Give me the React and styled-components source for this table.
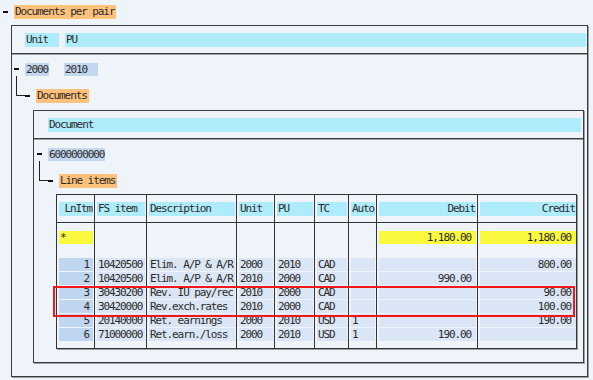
import React from 'react';
import styled, { createGlobalStyle } from 'styled-components';

const GlobalStyle = createGlobalStyle`
  body {
    margin: 0;
    background: #eef4fa;
    font-family: "DejaVu Sans Mono", "Liberation Mono", monospace;
    font-size: 11px;
    letter-spacing: -1.1px;
    color: #2b2b2b;
  }
`;

const COLS = '38px 52px 90px 38px 40px 34px 28px 101px 99px';

const TONES = {
  orange: '#ffc27c',
  cyan: '#aeebfb',
  key: '#c3d7ef',
  item: '#c0d5ef',
  cell: '#dae6f5',
  total: '#f9f93d',
  none: 'transparent',
};

const Page = styled.div`
  width: 593px;
  height: 380px;
  padding-top: 5px;
  box-sizing: border-box;
  overflow: hidden;
`;

const NodeRow = styled.div`
  display: flex;
  align-items: center;
  height: 14px;
  padding-left: 3px;
`;

const Toggle = styled.span`
  flex-shrink: 0;
  width: 5px;
  height: 2px;
  margin-right: 6px;
  background: #111;
`;

const Label = styled.span`
  height: 14px;
  line-height: 14px;
  padding: 0 2px 0 1px;
  background: ${p => TONES[p.$tone]};
  white-space: nowrap;
`;

const Frame = styled.div`
  margin: ${p => p.$margin};
  padding-bottom: 13px;
  border: 1px solid #3d3d3d;
  box-shadow: 1px 1px 0 #9aa0a6;
`;

const FrameHead = styled.div`
  display: flex;
  gap: 6px;
  padding: 7px ${p => p.$right}px 6px ${p => p.$left}px;
  border-bottom: 1px solid #3d3d3d;
  box-shadow: 0 1px 0 #9aa0a6;
`;

const HeadField = styled.span`
  height: 14px;
  line-height: 14px;
  padding-left: 1px;
  background: ${TONES.cyan};
  ${p => (p.$width ? `width: ${p.$width}px;` : 'flex: 1;')}
`;

const FrameBody = styled.div`
  padding-left: ${p => p.$pad}px;
`;

const KeyRow = styled.div`
  display: flex;
  align-items: center;
  height: 14px;
  margin-top: 8px;
`;

const KeySlot = styled.div`
  width: ${p => p.$width}px;
  margin-right: 6px;
  display: flex;
`;

const KeyField = styled.span`
  width: ${p => (p.$width ? `${p.$width}px` : 'auto')};
  height: 13px;
  line-height: 13px;
  padding: 0 1px;
  background: ${TONES.key};
`;

const BranchRow = styled.div`
  display: flex;
  align-items: flex-end;
`;

const Elbow = styled.span`
  flex-shrink: 0;
  width: 9px;
  height: 20px;
  margin: 0 0 7px 2px;
  box-sizing: border-box;
  border-left: 1px solid #222;
  border-bottom: 1px solid #222;
`;

const BranchToggle = styled(Toggle)`
  margin-bottom: 6px;
`;

const Table = styled.div`
  margin: 6px 6px 0 19px;
  border: 1px solid #333;
  box-shadow: 1px 1px 0 #9aa0a6;
`;

const Row = styled.div`
  display: grid;
  grid-template-columns: ${COLS};
  ${p => p.$head && 'border-bottom: 1px solid #333;'}
`;

const Cell = styled.div`
  box-sizing: border-box;
  min-width: 0;
  height: ${p => p.$height}px;
  padding: ${p => p.$pt || 0}px 1px 0 2px;
  border-right: ${p => (p.$last ? 'none' : '1px solid #333')};
`;

const Field = styled.div`
  height: ${p => p.$h || 13}px;
  line-height: ${p => p.$h || 13}px;
  padding: 0 ${p => p.$pr || 0}px 0 1px;
  background: ${p => TONES[p.$tone]};
  text-align: ${p => p.$align || 'left'};
  white-space: nowrap;
  overflow: hidden;
`;

const Highlight = styled.div`
  position: relative;

  &::after {
    content: '';
    position: absolute;
    top: 0;
    left: -4px;
    right: 1px;
    bottom: -3px;
    border: 2px solid #f01818;
    pointer-events: none;
  }
`;

const columns = [
  { key: 'n', title: 'LnItm', align: 'right', pr: 4 },
  { key: 'fs', title: 'FS item' },
  { key: 'desc', title: 'Description' },
  { key: 'unit', title: 'Unit' },
  { key: 'pu', title: 'PU' },
  { key: 'tc', title: 'TC' },
  { key: 'auto', title: 'Auto' },
  { key: 'debit', title: 'Debit', align: 'right', pr: 5 },
  { key: 'credit', title: 'Credit', align: 'right', pr: 5 },
];

const items = [
  { n: '1', fs: '10420500', desc: 'Elim. A/P & A/R', unit: '2000', pu: '2010', tc: 'CAD', auto: '', debit: '', credit: '800.00' },
  { n: '2', fs: '10420500', desc: 'Elim. A/P & A/R', unit: '2010', pu: '2000', tc: 'CAD', auto: '', debit: '990.00', credit: '' },
  { n: '3', fs: '30430200', desc: 'Rev. IU pay/rec', unit: '2010', pu: '2000', tc: 'CAD', auto: '', debit: '', credit: '90.00' },
  { n: '4', fs: '30420000', desc: 'Rev.exch.rates', unit: '2010', pu: '2000', tc: 'CAD', auto: '', debit: '', credit: '100.00' },
  { n: '5', fs: '20140000', desc: 'Ret. earnings', unit: '2000', pu: '2010', tc: 'USD', auto: '1', debit: '', credit: '190.00' },
  { n: '6', fs: '71000000', desc: 'Ret.earn./loss', unit: '2000', pu: '2010', tc: 'USD', auto: '1', debit: '190.00', credit: '' },
];

const totals = { n: '*', debit: '1,180.00', credit: '1,180.00' };

const HeaderRow = () => (
  <Row $head>
    {columns.map((c, i) => (
      <Cell key={c.key} $height={27} $pt={7} $last={i === columns.length - 1}>
        <Field $h={14} $tone="cyan" $align={c.align} $pr={c.align ? 1 : 0}>{c.title}</Field>
      </Cell>
    ))}
  </Row>
);

const TotalRow = () => (
  <Row>
    {columns.map((c, i) => {
      const value = totals[c.key];
      return (
        <Cell key={c.key} $height={35} $pt={8} $last={i === columns.length - 1}>
          {value && (
            <Field $tone="total" $align={c.key === 'n' ? 'left' : c.align} $pr={c.key === 'n' ? 0 : c.pr}>
              {value}
            </Field>
          )}
        </Cell>
      );
    })}
  </Row>
);

const ItemRow = ({ item }) => (
  <Row>
    {columns.map((c, i) => (
      <Cell key={c.key} $height={14} $last={i === columns.length - 1}>
        <Field $tone={c.key === 'n' ? 'item' : 'cell'} $align={c.align} $pr={c.pr}>
          {item[c.key]}
        </Field>
      </Cell>
    ))}
  </Row>
);

const FillerRow = ({ height }) => (
  <Row>
    {columns.map((c, i) => (
      <Cell key={c.key} $height={height} $last={i === columns.length - 1} />
    ))}
  </Row>
);

const LineItems = () => (
  <Table>
    <HeaderRow />
    <TotalRow />
    {items.slice(0, 2).map(item => <ItemRow key={item.n} item={item} />)}
    <Highlight>
      {items.slice(2, 4).map(item => <ItemRow key={item.n} item={item} />)}
    </Highlight>
    {items.slice(4).map(item => <ItemRow key={item.n} item={item} />)}
    <FillerRow height={6} />
  </Table>
);

export default function App() {
  return (
    <Page>
      <GlobalStyle />
      <NodeRow>
        <Toggle />
        <Label $tone="orange">Documents per pair</Label>
      </NodeRow>

      <Frame $margin="6px 5px 0 11px">
        <FrameHead $left={13} $right={1}>
          <HeadField $width={33}>Unit</HeadField>
          <HeadField>PU</HeadField>
        </FrameHead>
        <FrameBody $pad={2}>
          <KeyRow>
            <Toggle />
            <KeySlot $width={33}><KeyField>2000</KeyField></KeySlot>
            <KeySlot $width={34}><KeyField $width={33}>2010</KeyField></KeySlot>
          </KeyRow>
          <BranchRow>
            <Elbow />
            <BranchToggle />
            <Label $tone="orange">Documents</Label>
          </BranchRow>

          <Frame $margin="7px 3px 0 19px">
            <FrameHead $left={14} $right={2}>
              <HeadField>Document</HeadField>
            </FrameHead>
            <FrameBody $pad={3}>
              <KeyRow>
                <Toggle />
                <KeyField>6000000000</KeyField>
              </KeyRow>
              <BranchRow>
                <Elbow />
                <BranchToggle />
                <Label $tone="orange">Line items</Label>
              </BranchRow>
              <LineItems />
            </FrameBody>
          </Frame>
        </FrameBody>
      </Frame>
    </Page>
  );
}
